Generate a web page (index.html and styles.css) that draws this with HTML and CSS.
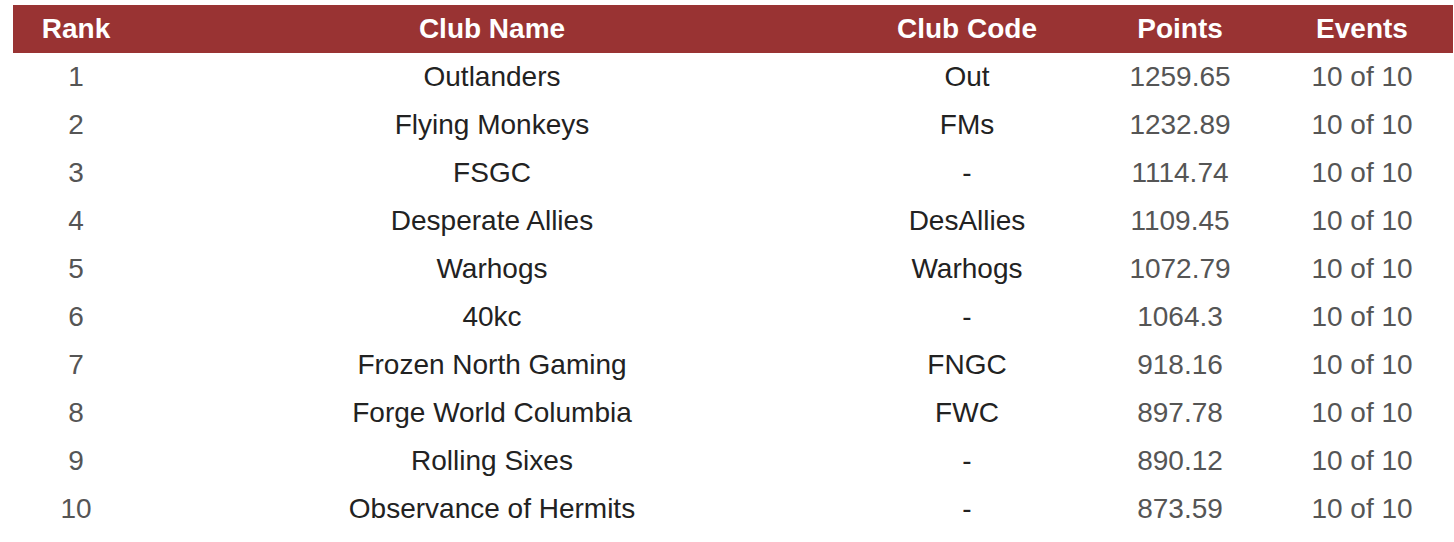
FILE: index.html
```html
<!DOCTYPE html>
<html>
<head>
<meta charset="utf-8">
<link rel="stylesheet" href="styles.css">
</head>
<body>
<table class="standings">
  <colgroup>
    <col class="c-rank"><col class="c-name"><col class="c-code"><col class="c-points"><col class="c-events">
  </colgroup>
  <thead>
    <tr><th>Rank</th><th>Club Name</th><th>Club Code</th><th>Points</th><th>Events</th></tr>
  </thead>
  <tbody>
    <tr><td class="num">1</td><td class="txt">Outlanders</td><td class="txt">Out</td><td class="num">1259.65</td><td class="num">10 of 10</td></tr>
    <tr><td class="num">2</td><td class="txt">Flying Monkeys</td><td class="txt">FMs</td><td class="num">1232.89</td><td class="num">10 of 10</td></tr>
    <tr><td class="num">3</td><td class="txt">FSGC</td><td class="txt">-</td><td class="num">1114.74</td><td class="num">10 of 10</td></tr>
    <tr><td class="num">4</td><td class="txt">Desperate Allies</td><td class="txt">DesAllies</td><td class="num">1109.45</td><td class="num">10 of 10</td></tr>
    <tr><td class="num">5</td><td class="txt">Warhogs</td><td class="txt">Warhogs</td><td class="num">1072.79</td><td class="num">10 of 10</td></tr>
    <tr><td class="num">6</td><td class="txt">40kc</td><td class="txt">-</td><td class="num">1064.3</td><td class="num">10 of 10</td></tr>
    <tr><td class="num">7</td><td class="txt">Frozen North Gaming</td><td class="txt">FNGC</td><td class="num">918.16</td><td class="num">10 of 10</td></tr>
    <tr><td class="num">8</td><td class="txt">Forge World Columbia</td><td class="txt">FWC</td><td class="num">897.78</td><td class="num">10 of 10</td></tr>
    <tr><td class="num">9</td><td class="txt">Rolling Sixes</td><td class="txt">-</td><td class="num">890.12</td><td class="num">10 of 10</td></tr>
    <tr><td class="num">10</td><td class="txt">Observance of Hermits</td><td class="txt">-</td><td class="num">873.59</td><td class="num">10 of 10</td></tr>
  </tbody>
</table>
</body>
</html>
```
FILE: styles.css
```css
html, body {
  margin: 0;
  padding: 0;
  background: #ffffff;
}
body {
  padding: 5px 0 0 13px;
  font-family: "Liberation Sans", Arial, sans-serif;
}
.standings {
  border-collapse: collapse;
  table-layout: fixed;
  width: 1440px;
  font-size: 28px;
}
.c-rank { width: 126px; }
.c-name { width: 706px; }
.c-code { width: 244px; }
.c-points { width: 182px; }
.c-events { width: 182px; }
.standings th {
  background: #993333;
  color: #ffffff;
  font-weight: bold;
  height: 48px;
  padding: 0;
  text-align: center;
  vertical-align: middle;
}
.standings td {
  height: 48px;
  padding: 0;
  text-align: center;
  vertical-align: middle;
}
.standings td.num { color: #555555; }
.standings td.txt { color: #222222; }
```
